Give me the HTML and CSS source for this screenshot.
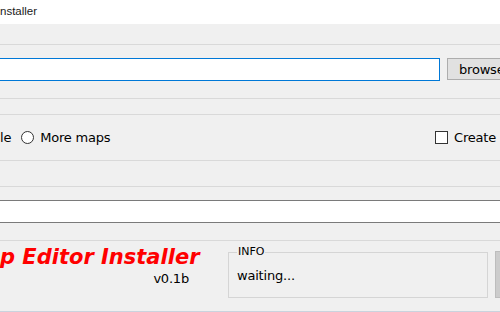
FILE: index.html
```html
<!DOCTYPE html>
<html lang="en">
<head>
  <meta charset="UTF-8" />
  <meta name="viewport" content="width=device-width, initial-scale=1.0"/>
  <title>Map Editor Installer</title>
  <link rel="stylesheet" href="styles.css">
</head>
<body>

  <!-- Window title bar -->
  <div class="titlebar">nstaller</div>

  <!-- Form panels -->
  <div class="panel panel-top"></div>

  <div class="panel path-row">
    <input type="text" class="path-input" value="">
    <button class="browse-button">browse</button>
  </div>

  <div class="panel panel-gap"></div>

  <div class="panel options-row">
    <span class="option-text">le</span>
    <label class="radio-option">
      <span class="radio"></span>
      <span class="option-text">More maps</span>
    </label>
    <label class="check-option">
      <span class="checkbox"></span>
      <span class="option-text">Create</span>
    </label>
  </div>

  <div class="panel panel-mid"></div>

  <div class="panel log-section">
    <div class="log-box"></div>
  </div>

  <!-- Footer: title, version and status -->
  <div class="footer">
    <div class="brand">
      <div class="brand-title">p Editor Installer</div>
      <div class="brand-version">v0.1b</div>
    </div>

    <fieldset class="info-box">
      <legend>INFO</legend>
      <div class="info-text">waiting...</div>
    </fieldset>

    <div class="install-button"></div>
  </div>

</body>
</html>
```

FILE: styles.css
```css
/* Base window */
body {
  margin: 0;
  width: 500px;
  height: 312px;
  overflow: hidden;
  background-color: #f0f0f0;
  color: #000;
  font-family: 'DejaVu Sans', Verdana, sans-serif;
  font-size: 13px;
  letter-spacing: -0.2px;
}

/* Title bar */
.titlebar {
  height: 24px;
  line-height: 23px;
  background-color: #ffffff;
  font-family: 'Liberation Sans', Arial, sans-serif;
  font-size: 11.5px;
  letter-spacing: 0;
  color: #1a1a1a;
}

/* Panels separated by thin lines */
.panel {
  border-bottom: 1px solid #d9d9d9;
}

.panel-top {
  height: 20px;
}

.panel-gap {
  height: 15px;
}

.panel-mid {
  height: 25px;
}

/* Path row */
.path-row {
  height: 40px;
  padding-top: 13px;
  display: flex;
  align-items: flex-start;
}

.path-input {
  flex-shrink: 0;
  width: 442px;
  height: 23px;
  box-sizing: border-box;
  margin: 0 0 0 -2px;
  border: 1px solid #0078d7;
  background-color: #fff;
  outline: none;
}

.browse-button {
  flex-shrink: 0;
  width: 53px;
  height: 22px;
  margin-left: 7px;
  padding: 0 0 0 11px;
  text-align: left;
  white-space: nowrap;
  overflow: hidden;
  border: 1px solid #adadad;
  border-right: none;
  background-color: #e1e1e1;
  font-family: inherit;
  font-size: 13px;
  letter-spacing: -0.2px;
  color: #000;
}

/* Options row */
.options-row {
  height: 45px;
  display: flex;
  align-items: center;
}

.radio-option,
.check-option {
  display: flex;
  align-items: center;
  gap: 6px;
}

.radio-option {
  margin-left: 10px;
}

.check-option {
  margin-left: auto;
  padding-right: 4px;
}

.radio {
  width: 11px;
  height: 11px;
  border: 1px solid #333;
  border-radius: 50%;
  background-color: #fff;
}

.checkbox {
  width: 11px;
  height: 11px;
  border: 1px solid #333;
  background-color: #fff;
}

/* Log box */
.log-section {
  padding: 13px 0 17px;
}

.log-box {
  height: 21px;
  background-color: #fff;
  border-top: 1px solid #7a7a7a;
  border-bottom: 1px solid #7a7a7a;
}

/* Footer */
.footer {
  height: 70px;
  display: flex;
  align-items: flex-start;
  border-bottom: 1px solid #cad3de;
}

.brand {
  width: 228px;
  flex-shrink: 0;
}

.brand-title {
  padding-top: 4px;
  line-height: 25px;
  font-size: 21px;
  font-weight: bold;
  font-style: italic;
  letter-spacing: 0;
  color: #ff0000;
  white-space: nowrap;
}

.brand-version {
  margin-top: 1px;
  padding-right: 39px;
  line-height: 16px;
  text-align: right;
}

.info-box {
  flex-shrink: 0;
  box-sizing: border-box;
  width: 260px;
  height: 52px;
  margin: 5px 0 0;
  padding: 10px 8px 0;
  border: 1px solid #d5d5d5;
}

.info-box legend {
  margin-left: 0;
  padding: 0 1px;
  font-size: 11px;
  line-height: 12px;
  letter-spacing: 0;
}

.info-text {
  line-height: 16px;
}

.install-button {
  flex-shrink: 0;
  width: 40px;
  height: 45px;
  margin: 10px 0 0 7px;
  background-color: #cccccc;
  border: 1px solid #bdbdbd;
}
```
